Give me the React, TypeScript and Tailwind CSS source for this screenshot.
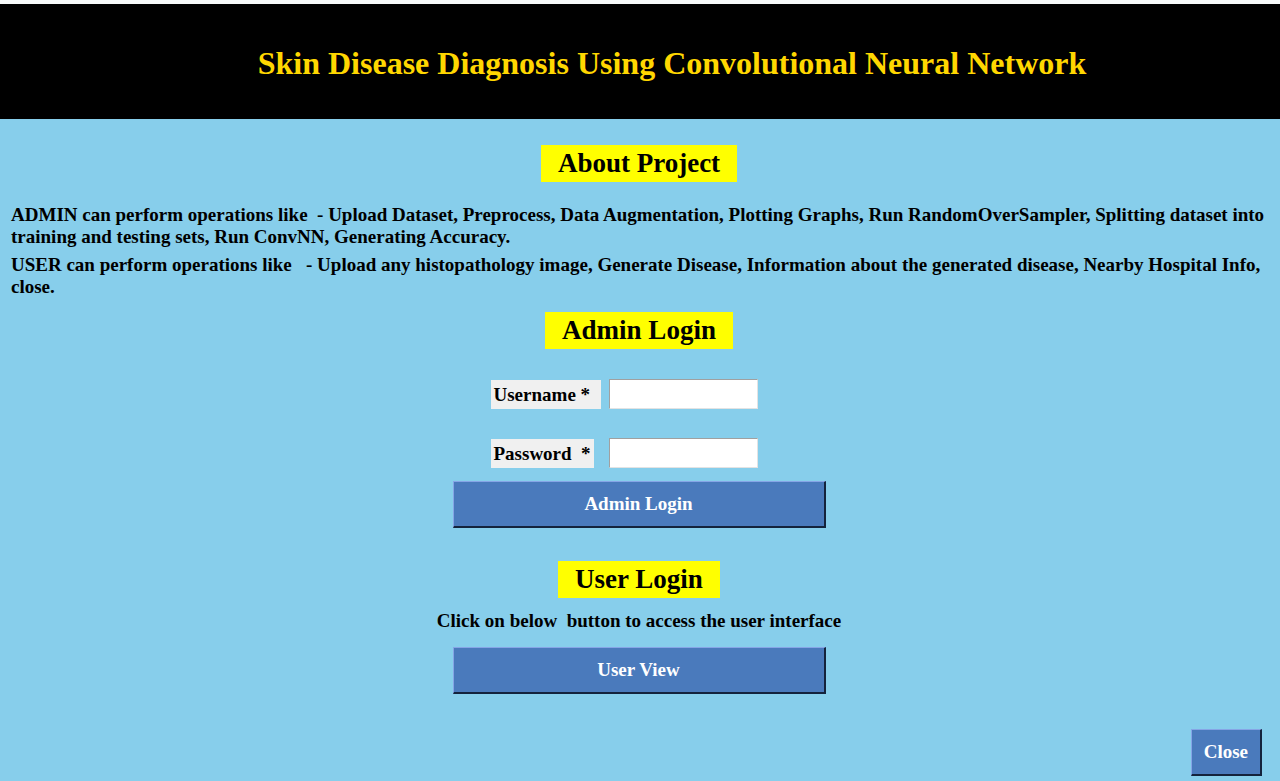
import React from "react";

const heading = "bg-[#ffff00] px-[17px] text-[27px] leading-[37px] font-bold";
const bevel =
  "h-[47px] border-2 border-t border-l border-t-[#86a5e6] border-l-[#86a5e6] border-r-[#14233c] border-b-[#14233c] bg-[#4a7abc] text-[19px] font-bold text-white";
const wideButton = "block w-[373px] " + bevel;
const field =
  "h-[30px] w-[149px] border border-t-[#a0a0a0] border-l-[#a0a0a0] border-r-[#e3e3e3] border-b-[#e3e3e3] bg-white px-1 text-[19px] outline-none";
const label = "bg-[#f0f0f0] px-[3px] text-[19px] leading-[29px] whitespace-pre";

export default function App() {
  return (
    <div className="flex min-h-screen flex-col bg-[#87ceeb] font-['Liberation_Serif',serif] font-bold text-black">
      <header className="border-t-4 border-[#f8fbfa] bg-black pt-[39px] pb-9 pl-16 text-center">
        <h1 className="text-[32px] leading-10 text-[#ffd700]">
          Skin Disease Diagnosis Using Convolutional Neural Network
        </h1>
      </header>
      <main className="flex flex-1 flex-col items-center pr-0.5">
        <h2 className={heading + " mt-[26px]"}>About Project</h2>
        <div className="mt-[22px] flex w-full flex-col gap-[6px] px-[11px] text-[19px] leading-[22px] whitespace-pre-wrap">
          <p>{"ADMIN can perform operations like  - Upload Dataset, Preprocess, Data Augmentation, Plotting Graphs, Run RandomOverSampler, Splitting dataset into training and testing sets, Run ConvNN, Generating Accuracy."}</p>
          <p>{"USER can perform operations like   - Upload any histopathology image, Generate Disease, Information about the generated disease, Nearby Hospital Info, close."}</p>
        </div>
        <h2 className={heading + " mt-[14px]"}>Admin Login</h2>
        <form className="mt-[30px] flex flex-col items-center" onSubmit={(e) => e.preventDefault()}>
          <div className="mr-[30px] grid grid-cols-[110px_149px] items-center gap-x-2 gap-y-[29px]">
            <div className="flex">
              <label htmlFor="username" className={label + " flex-1"}>Username *</label>
            </div>
            <input id="username" type="text" className={field} />
            <div className="flex">
              <label htmlFor="password" className={label}>{"Password  *"}</label>
            </div>
            <input id="password" type="password" className={field} />
          </div>
          <button type="submit" className={wideButton + " mt-[13px]"}>Admin Login</button>
        </form>
        <h2 className={heading + " mt-[33px]"}>User Login</h2>
        <p className="mt-3 text-[19px] leading-[22px] whitespace-pre">{"Click on below  button to access the user interface"}</p>
        <button type="button" className={wideButton + " mt-[15px]"}>User View</button>
        <button type="button" className={"mt-[35px] mr-4 mb-1 self-end px-3 " + bevel}>
          Close
        </button>
      </main>
    </div>
  );
}
